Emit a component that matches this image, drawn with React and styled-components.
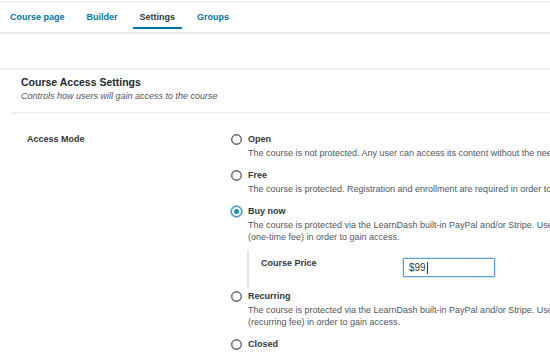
import React from "react";
import styled, { createGlobalStyle } from "styled-components";

const Global = createGlobalStyle`
  html, body { margin: 0; padding: 0; background: #fff; }
  body { font-family: "Liberation Sans", Arial, sans-serif; }
  * { box-sizing: border-box; }
`;

const Page = styled.div`
  width: 550px;
  height: 352px;
  overflow: hidden;
  background: #fff;
  padding-top: 1px;
  color: #23282d;
`;

const Nav = styled.nav`
  display: flex;
  align-items: flex-start;
  gap: 8px;
  height: 33px;
  padding-left: 3px;
  border-top: 2px solid #f1f1f1;
  border-bottom: 2px solid #eeeeee;
`;

const Tab = styled.a`
  display: block;
  padding: 8px 7px 4px;
  font-size: 9px;
  line-height: 12px;
  font-weight: 700;
  text-decoration: none;
  white-space: nowrap;
  color: ${(p) => (p.$active ? "#32373c" : "#0073aa")};
  border-bottom: 2px solid ${(p) => (p.$active ? "#0073aa" : "transparent")};
`;

const Band = styled.div`
  height: 36px;
  border-bottom: 2px solid #eeeeee;
`;

const SectionHeader = styled.header`
  margin-left: 11px;
  padding: 6px 0 10px 10px;
  border-bottom: 2px solid #f0f0f0;
`;

const Title = styled.h2`
  margin: 0;
  font-size: 10.5px;
  line-height: 12px;
  font-weight: 700;
  color: #23282d;
`;

const Subtitle = styled.p`
  margin: 2px 0 0;
  font-size: 9px;
  line-height: 12px;
  font-style: italic;
  color: #50575e;
`;

const FieldRow = styled.div`
  display: grid;
  grid-template-columns: 204px 1fr;
  padding: 19px 0 0 27px;
`;

const FieldLabel = styled.div`
  font-size: 9px;
  line-height: 12px;
  font-weight: 700;
  color: #32373c;
`;

const Options = styled.div`
  display: flex;
  flex-direction: column;
  min-width: 0;
`;

const Option = styled.div`
  margin-bottom: ${(p) => (p.$tight ? "0" : "10px")};
`;

const OptionHead = styled.label`
  display: flex;
  align-items: center;
  gap: 6px;
  height: 12px;
  font-size: 9px;
  line-height: 12px;
  font-weight: 700;
  color: #32373c;
  white-space: nowrap;
`;

const Radio = styled.span`
  position: relative;
  flex: none;
  width: 11px;
  height: 11px;
  border-radius: 50%;
  border: 1px solid ${(p) => (p.$checked ? "#2e86c4" : "#50575e")};
  box-shadow: ${(p) =>
    p.$checked
      ? "0 0 0 1px rgba(91,157,217,0.6)"
      : "inset 0 0 0 0.4px #50575e"};
  background: #fff;

  &::after {
    content: "";
    display: ${(p) => (p.$checked ? "block" : "none")};
    position: absolute;
    left: 2px;
    top: 2px;
    width: 5px;
    height: 5px;
    border-radius: 50%;
    background: #1e8cbe;
  }
`;

const Desc = styled.p`
  margin: 2px 0 0;
  padding-left: 17px;
  font-size: 9px;
  line-height: 12px;
  color: #50575e;
  white-space: nowrap;
`;

const SubField = styled.div`
  display: flex;
  align-items: flex-start;
  height: 38px;
  margin: 7px 0 2px 16px;
  border-left: 2px solid #e5e5e5;
`;

const SubLabel = styled.div`
  width: 154px;
  padding: 7px 0 0 12px;
  font-size: 9px;
  line-height: 12px;
  font-weight: 700;
  color: #32373c;
`;

const PriceInput = styled.div`
  display: flex;
  align-items: center;
  width: 92px;
  height: 19px;
  margin-top: 8px;
  padding-left: 5px;
  border: 1px solid #5b9dd9;
  border-radius: 1px;
  box-shadow: 0 0 2px rgba(30, 140, 190, 0.7);
  font-size: 10px;
  color: #32373c;
`;

const Caret = styled.span`
  display: inline-block;
  width: 1px;
  height: 12px;
  margin-left: 1px;
  background: #32373c;
`;

const modes = [
  {
    key: "open",
    label: "Open",
    lines: [
      "The course is not protected. Any user can access its content without the need to be logged-in or enrolled.",
    ],
  },
  {
    key: "free",
    label: "Free",
    lines: [
      "The course is protected. Registration and enrollment are required in order to access the content.",
    ],
  },
  {
    key: "buy",
    label: "Buy now",
    checked: true,
    lines: [
      "The course is protected via the LearnDash built-in PayPal and/or Stripe. Users need to purchase the course",
      "(one-time fee) in order to gain access.",
    ],
  },
  {
    key: "recurring",
    label: "Recurring",
    lines: [
      "The course is protected via the LearnDash built-in PayPal and/or Stripe. Users need to purchase the course",
      "(recurring fee) in order to gain access.",
    ],
  },
  {
    key: "closed",
    label: "Closed",
    lines: [
      "The course can only be accessed through admin enrollment (manual), group enrollment, or integration.",
    ],
  },
];

export default function App() {
  return (
    <>
      <Global />
      <Page>
        <Nav>
          <Tab>Course page</Tab>
          <Tab>Builder</Tab>
          <Tab $active>Settings</Tab>
          <Tab>Groups</Tab>
        </Nav>
        <Band />
        <SectionHeader>
          <Title>Course Access Settings</Title>
          <Subtitle>Controls how users will gain access to the course</Subtitle>
        </SectionHeader>
        <FieldRow>
          <FieldLabel>Access Mode</FieldLabel>
          <Options>
            {modes.map((m) => (
              <Option key={m.key} $tight={m.checked}>
                <OptionHead>
                  <Radio $checked={m.checked} />
                  {m.label}
                </OptionHead>
                <Desc>
                  {m.lines.map((l, i) => (
                    <React.Fragment key={i}>
                      {i > 0 && <br />}
                      {l}
                    </React.Fragment>
                  ))}
                </Desc>
                {m.checked && (
                  <SubField>
                    <SubLabel>Course Price</SubLabel>
                    <PriceInput>
                      $99
                      <Caret />
                    </PriceInput>
                  </SubField>
                )}
              </Option>
            ))}
          </Options>
        </FieldRow>
      </Page>
    </>
  );
}
